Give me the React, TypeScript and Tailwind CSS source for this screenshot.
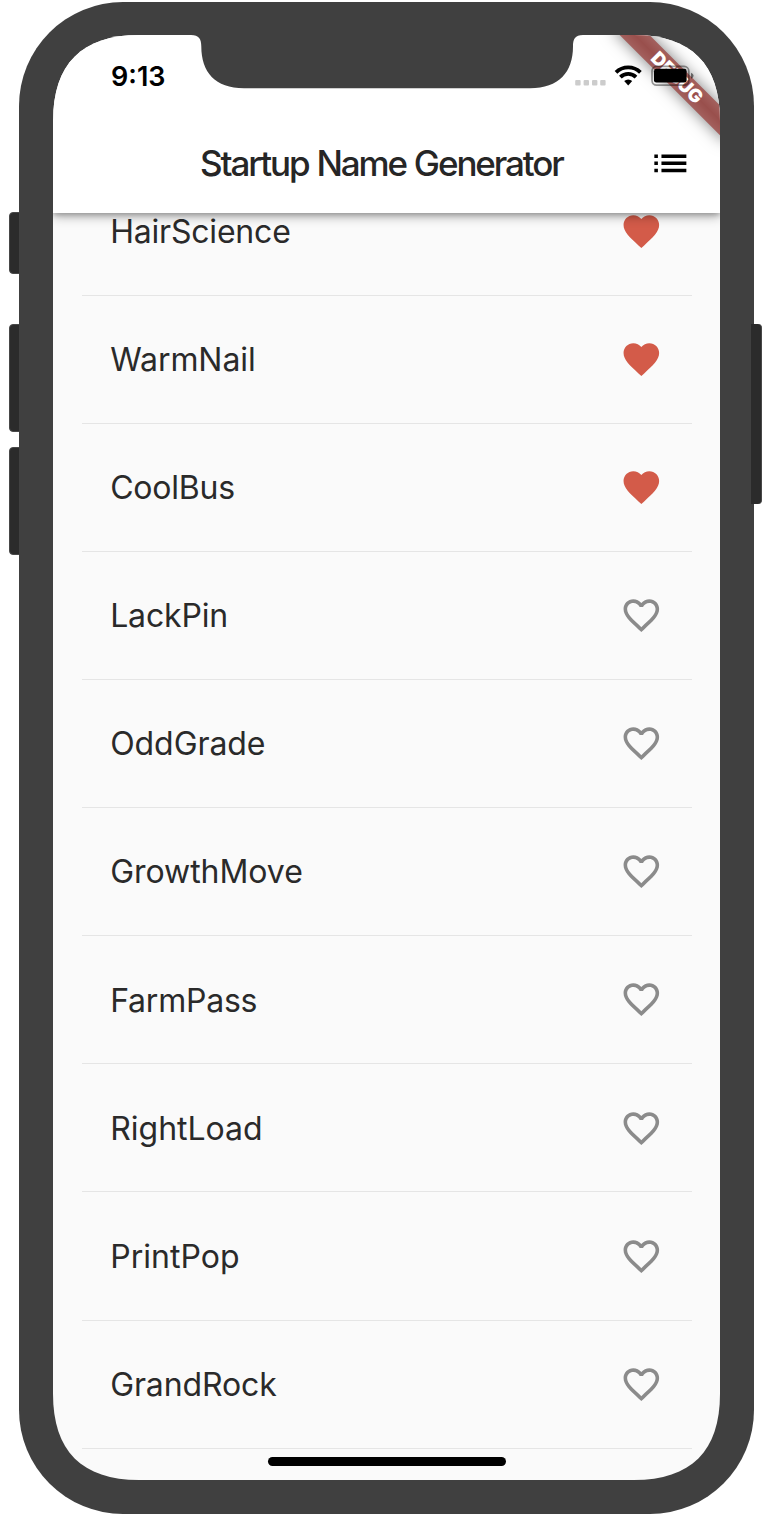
import { useState } from "react";

const HEART =
  "M12 21.35l-1.45-1.32C5.4 15.36 2 12.28 2 8.5 2 5.42 4.42 3 7.5 3c1.74 0 3.41.81 4.5 2.09C13.09 3.81 14.76 3 16.5 3 19.58 3 22 5.42 22 8.5c0 3.78-3.4 6.86-8.55 11.54L12 21.35z";
const HEART_OUTLINE =
  "M16.5 3c-1.74 0-3.41.81-4.5 2.09C10.91 3.81 9.24 3 7.5 3 4.42 3 2 5.42 2 8.5c0 3.78 3.4 6.86 8.55 11.54L12 21.35l1.45-1.32C18.6 15.36 22 12.28 22 8.5 22 5.42 19.58 3 16.5 3zm-4.4 15.55l-.1.1-.1-.1C7.14 14.24 4 11.39 4 8.5 4 6.5 5.5 5 7.5 5c1.54 0 3.04.99 3.57 2.36h1.87C13.46 5.99 14.96 5 16.5 5c2 0 3.5 1.5 3.5 3.5 0 2.89-3.14 5.74-7.9 10.05z";

const names = [
  { name: "HairScience", spacing: "tracking-[-0.2px]" },
  { name: "WarmNail", spacing: "tracking-[-0.07px]" },
  { name: "CoolBus", spacing: "tracking-[-0.22px]" },
  { name: "LackPin", spacing: "tracking-[-0.17px]" },
  { name: "OddGrade", spacing: "tracking-[-0.07px]" },
  { name: "GrowthMove", spacing: "tracking-[-0.05px]" },
  { name: "FarmPass", spacing: "tracking-[-0.22px]" },
  { name: "RightLoad", spacing: "tracking-[-0.01px]" },
  { name: "PrintPop", spacing: "tracking-[0.02px]" },
  { name: "GrandRock", spacing: "tracking-[-0.12px]" },
];

function StatusBar() {
  return (
    <div className="flex h-[78px] justify-between pt-[26px] pr-[27px] pl-[58px]">
      <span className="text-[27px] leading-[31px] font-semibold text-black">9:13</span>
      <svg className="mt-[3px] h-[24px] w-[120px]" viewBox="573 64 120 24">
        <g fill="#ccc">
          <rect x="575.2" y="80" width="5.4" height="5.4" rx="1" />
          <rect x="583.6" y="80" width="5.4" height="5.4" rx="1" />
          <rect x="592" y="80" width="5.4" height="5.4" rx="1" />
          <rect x="600.2" y="80" width="5.4" height="5.4" rx="1" />
        </g>
        <g fill="none" stroke="#000" strokeWidth="3.8">
          <path d="M616 72.4a17.4 17.4 0 0 1 24.4 0" />
          <path d="M620.4 77.1a11.2 11.2 0 0 1 15.6 0" />
        </g>
        <path d="M628.2 85.4l-4-4.3a5.9 5.9 0 0 1 8 0z" fill="#000" />
      </svg>
    </div>
  );
}

function DebugBanner() {
  return (
    <div className="absolute top-[32.4px] left-[544px] flex h-[21.3px] w-[160px] rotate-45 items-center justify-center bg-[#994f4c] shadow-[0_0_16px_rgba(0,0,0,0.5)]">
      <div className="absolute inset-0 bg-linear-to-b from-white/10 via-transparent to-white/10" />
      <span className="relative text-[18.5px] leading-none font-black text-white">DEBUG</span>
    </div>
  );
}

function Battery() {
  return (
    <svg className="absolute top-[29px] left-[597px] h-[24px] w-[46px]" viewBox="650 64 46 24">
      <rect x="652" y="66.4" width="36.8" height="18.8" rx="4.6" fill="none" stroke="#000" strokeOpacity=".4" strokeWidth="1.7" />
      <rect x="654" y="68.8" width="32.6" height="13.8" rx="2.4" />
      <path d="M691 72.8q2.6 1 2.6 3t-2.6 3z" fillOpacity=".5" />
    </svg>
  );
}

export default function App() {
  const [saved, setSaved] = useState(["HairScience", "WarmNail", "CoolBus"]);
  const toggle = (name: string) =>
    setSaved((s) => (s.includes(name) ? s.filter((n) => n !== name) : [...s, name]));

  return (
    <div className="relative h-[1516px] w-[772px] overflow-hidden bg-white pt-[2px] pl-[19px] font-[Inter,sans-serif]">
      <div className="absolute top-[212px] left-[9px] h-[62px] w-[20px] rounded-[4px] border border-[#484848] bg-[#2b2b2b]" />
      <div className="absolute top-[324px] left-[9px] h-[108px] w-[20px] rounded-[4px] border border-[#484848] bg-[#2b2b2b]" />
      <div className="absolute top-[447px] left-[9px] h-[108px] w-[20px] rounded-[4px] border border-[#484848] bg-[#2b2b2b]" />
      <div className="relative h-[1512px] w-[734.5px] rounded-[104px] bg-[#404040] pt-[33px] pl-[34px]">
        <div className="relative flex h-[1445px] w-[667px] flex-col overflow-hidden bg-[#fafafa] [clip-path:path('M0_86C0_29_29_0_86_0H581C638_0_667_29_667_86V1359C667_1416_638_1445_581_1445H86C29_1445_0_1416_0_1359Z')]">
          <header className="relative z-10 h-[178px] shrink-0 bg-white shadow-[0_4px_10px_rgba(0,0,0,0.28),0_2px_5px_rgba(0,0,0,0.22)]">
            <StatusBar />
            <div className="flex h-[100px] items-center justify-between pr-[28px] pl-[147px]">
              <h1 className="text-[35px] leading-[44px] font-medium tracking-[-2.1px] [word-spacing:0.6px] whitespace-nowrap text-[#262626]">Startup Name Generator</h1>
              <button aria-label="Saved suggestions">
                <svg className="h-[42.7px] w-[42.7px]" viewBox="0 0 24 24">
                  <path d="M3 13h2v-2H3v2zm0 4h2v-2H3v2zm0-8h2V7H3v2zm4 4h14v-2H7v2zm0 4h14v-2H7v2zM7 7v2h14V7H7z" />
                </svg>
              </button>
            </div>
            <DebugBanner />
            <Battery />
            <svg className="absolute top-0 left-[134px] h-[54px] w-[400px]" viewBox="187 35 400 54">
              <path d="M187 35H191C199 35 201.300 39 201.300 46.500C201.300 72 215 88.300 244 88.300H530C559 88.300 573 72 573 46.500C573 39 575 35 583 35Z" fill="#404040" />
            </svg>
          </header>
          <main className="-mt-[45.400px] px-[28.500px]">
            {names.map(({ name, spacing }) => (
              <div key={name} className="flex h-[128.120px] items-center justify-between border-b border-[#e5e5e5] pr-[28.500px] pl-[28.700px]">
                <span className={`pt-[1.500px] text-[32px] leading-[40px] text-[#2a2a2a] ${spacing}`}>{name}</span>
                <button aria-label={name} onClick={() => toggle(name)}>
                  <svg className={`h-[42.7px] w-[42.7px] ${saved.includes(name) ? "fill-[#d35b49]" : "fill-[#8b8b8b]"}`} viewBox="0 0 24 24">
                    <path d={saved.includes(name) ? HEART : HEART_OUTLINE} />
                  </svg>
                </button>
              </div>
            ))}
          </main>
          <div className="absolute top-[1422px] left-[215px] h-[9px] w-[238px] rounded-full bg-black" />
        </div>
      </div>
      <div className="absolute top-[324px] left-[751px] h-[180px] w-[11px] rounded-r-[4px] border-r border-[#484848] bg-[#2b2b2b]" />
    </div>
  );
}
